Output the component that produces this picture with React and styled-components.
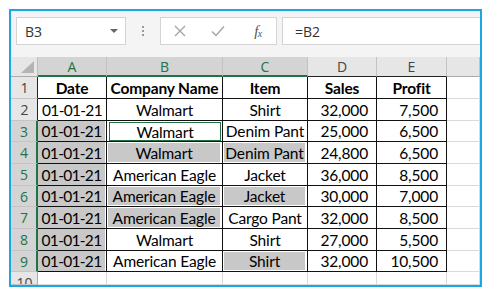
import React from 'react';
import styled, { createGlobalStyle } from 'styled-components';

const Global = createGlobalStyle`
  html, body { margin: 0; padding: 0; background: #fff; }
  body { font-family: Lato, "Noto Sans", sans-serif; }
`;

const GREEN = '#217346';

const Frame = styled.div`
  margin: 9px 0 0 9px;
  width: 473px;
  height: 278px;
  box-sizing: border-box;
  border: 2px solid #1aa7e2;
  display: flex;
  flex-direction: column;
  overflow: hidden;
  background: #fff;
`;

const Toolbar = styled.div`
  height: 46px;
  flex: none;
  box-sizing: border-box;
  display: flex;
  align-items: flex-start;
  padding: 6px 0 0 5px;
  background: #f4f4f4;
  font-family: "Open Sans", "Noto Sans", sans-serif;
`;

const NameBox = styled.div`
  width: 110px;
  height: 28px;
  box-sizing: border-box;
  border: 1px solid #d4d4d4;
  background: #fff;
  display: flex;
  align-items: center;
  justify-content: space-between;
  padding: 0 7px 0 8px;
  font-size: 14px;
  color: #333;
`;

const Arrow = styled.span`
  width: 0;
  height: 0;
  border-left: 4px solid transparent;
  border-right: 4px solid transparent;
  border-top: 4px solid #666;
`;

const Dots = styled.div`
  width: 34px;
  height: 28px;
  display: flex;
  flex-direction: column;
  align-items: center;
  justify-content: center;
  gap: 2px;
  & > span {
    width: 2px;
    height: 2px;
    background: #9a9a9a;
  }
`;

const ButtonBox = styled.div`
  width: 117px;
  height: 28px;
  box-sizing: border-box;
  border: 1px solid #d4d4d4;
  background: #fff;
  display: flex;
  align-items: center;
  padding-left: 9px;
`;

const IconSlot = styled.div`
  width: 20px;
  height: 20px;
  display: flex;
  align-items: center;
  justify-content: center;
  margin-left: ${(p) => p.$gap || 0}px;
  color: ${(p) => p.$color || '#a6a6a6'};
`;

const Fx = styled.span`
  font-family: "Liberation Serif", "DejaVu Serif", serif;
  font-style: italic;
  font-size: 15px;
  color: #555;
  letter-spacing: -0.5px;
  & > sub { font-size: 10px; vertical-align: -1px; }
`;

const FormulaInput = styled.div`
  flex: 1;
  margin-left: 5px;
  height: 28px;
  box-sizing: border-box;
  border: 1px solid #d4d4d4;
  border-right: none;
  background: #fff;
  display: flex;
  align-items: center;
  padding-left: 12px;
  font-size: 14px;
  color: #333;
`;

const Sheet = styled.div`
  display: grid;
  grid-template-columns: 27px 69px 116px 85px 69px 70px 33px;
  grid-template-rows: 20px 22px 22px 21px 22px 22px 21px 22px 22px 21px 13px;
  flex: none;
  color: #000;
`;

const Corner = styled.div`
  box-sizing: border-box;
  background: #e6e6e6;
  border-right: 1px solid #bdbdbd;
  border-bottom: 1px solid #ababab;
  display: flex;
  align-items: flex-end;
  justify-content: flex-end;
  padding: 0 3px 3px 0;
`;

const ColHeader = styled.div`
  box-sizing: border-box;
  background: ${(p) => (p.$selected ? '#d4d4d4' : '#e6e6e6')};
  color: ${(p) => (p.$selected ? GREEN : '#444')};
  border-right: 1px solid #c2c2c2;
  border-bottom: ${(p) =>
    p.$selected ? `2px solid ${GREEN}` : p.$table ? '1px solid #222' : '1px solid #ababab'};
  display: flex;
  align-items: center;
  justify-content: center;
  font-family: "Open Sans", "Noto Sans", sans-serif;
  font-size: 14px;
`;

const RowHeader = styled.div`
  box-sizing: border-box;
  overflow: hidden;
  background: ${(p) => (p.$selected ? '#d4d4d4' : '#e6e6e6')};
  color: ${(p) => (p.$selected ? GREEN : '#444')};
  border-bottom: 1px solid #c4c4c4;
  border-right: ${(p) =>
    p.$selected ? `2px solid ${GREEN}` : p.$table ? '1px solid #222' : '1px solid #ababab'};
  display: flex;
  align-items: ${(p) => (p.$cut ? 'flex-start' : 'center')};
  justify-content: center;
  padding: ${(p) => (p.$cut ? '3px 0 0 1px' : '0 0 0 1px')};
  line-height: ${(p) => (p.$cut ? '16px' : 'normal')};
  font-family: "Open Sans", "Noto Sans", sans-serif;
  font-size: 14px;
`;

const Cell = styled.div`
  box-sizing: border-box;
  display: flex;
  min-width: 0;
  border-right: 1px solid ${(p) => (p.$table ? '#111' : '#dadada')};
  border-bottom: 1px solid ${(p) => (p.$table ? '#111' : '#dadada')};
  background: #fff;
  overflow: hidden;
`;

const Content = styled.div`
  flex: 1;
  box-sizing: border-box;
  display: flex;
  align-items: center;
  justify-content: ${(p) => (p.$align === 'right' ? 'flex-end' : 'center')};
  padding-right: ${(p) => (p.$align === 'right' ? '8px' : '0')};
  margin: ${(p) => p.$inset || '0'};
  background: ${(p) => (p.$shaded ? '#c8c8c8' : 'transparent')};
  border: ${(p) => (p.$active ? `1px solid ${GREEN}` : 'none')};
  font-size: 15.5px;
  letter-spacing: ${(p) => (p.$tight ? '-0.7px' : '-0.15px')};
  font-weight: ${(p) => (p.$bold ? 700 : 400)};
  white-space: nowrap;
`;

const headers = ['A', 'B', 'C', 'D', 'E', ''];
const data = [
  ['Date', 'Company Name', 'Item', 'Sales', 'Profit'],
  ['01-01-21', 'Walmart', 'Shirt', '32,000', '7,500'],
  ['01-01-21', 'Walmart', 'Denim Pant', '25,000', '6,500'],
  ['01-01-21', 'Walmart', 'Denim Pant', '24,800', '6,500'],
  ['01-01-21', 'American Eagle', 'Jacket', '36,000', '8,500'],
  ['01-01-21', 'American Eagle', 'Jacket', '30,000', '7,000'],
  ['01-01-21', 'American Eagle', 'Cargo Pant', '32,000', '8,500'],
  ['01-01-21', 'Walmart', 'Shirt', '27,000', '5,500'],
  ['01-01-21', 'American Eagle', 'Shirt', '32,000', '10,500'],
];
const shaded = new Set(['A3', 'A4', 'A5', 'A6', 'A7', 'A8', 'A9', 'B4', 'B6', 'B7', 'C4', 'C6', 'C9']);

export default function App() {
  const cells = [];
  cells.push(
    <Corner key="corner">
      <svg width="13" height="12" viewBox="0 0 13 12">
        <polygon points="13,0 13,12 0,12" fill="#b4b4b4" />
      </svg>
    </Corner>
  );
  headers.forEach((h, i) => {
    cells.push(
      <ColHeader key={'h' + i} $selected={i < 3} $table={i >= 3 && i < 5}>
        {h}
      </ColHeader>
    );
  });
  for (let r = 1; r <= 10; r++) {
    const selected = r >= 3 && r <= 9;
    cells.push(
      <RowHeader key={'r' + r} $selected={selected} $table={r <= 2} $cut={r === 10}>
        {r}
      </RowHeader>
    );
    for (let c = 0; c < 6; c++) {
      const inTable = r <= 9 && c < 5;
      const ref = 'ABCDEF'[c] + r;
      const text = inTable ? data[r - 1][c] : '';
      const isShaded = shaded.has(ref);
      const active = ref === 'B3';
      const inset = isShaded ? (c === 0 ? '0 1px 0 0' : '1px 2px 1px 1px') : active ? '1px 1px 0 2px' : '0';
      cells.push(
        <Cell key={ref} $table={inTable}>
          <Content
            $shaded={isShaded}
            $active={active}
            $inset={inset}
            $bold={r === 1}
            $tight={r > 1 && c === 0}
            $align={r > 1 && c >= 3 ? 'right' : 'center'}
          >
            {text}
          </Content>
        </Cell>
      );
    }
  }

  return (
    <>
      <Global />
      <Frame>
        <Toolbar>
          <NameBox>
            B3
            <Arrow />
          </NameBox>
          <Dots>
            <span />
            <span />
            <span />
          </Dots>
          <ButtonBox>
            <IconSlot>
              <svg width="12" height="12" viewBox="0 0 12 12">
                <path d="M1 1L11 11M11 1L1 11" stroke="currentColor" strokeWidth="1.4" fill="none" />
              </svg>
            </IconSlot>
            <IconSlot $gap={18}>
              <svg width="14" height="12" viewBox="0 0 14 12">
                <path d="M1 6.5L5 10.5L13 1.5" stroke="currentColor" strokeWidth="1.5" fill="none" />
              </svg>
            </IconSlot>
            <IconSlot $gap={20} $color="#555">
              <Fx>
                f<sub>x</sub>
              </Fx>
            </IconSlot>
          </ButtonBox>
          <FormulaInput>=B2</FormulaInput>
        </Toolbar>
        <Sheet>{cells}</Sheet>
      </Frame>
    </>
  );
}
